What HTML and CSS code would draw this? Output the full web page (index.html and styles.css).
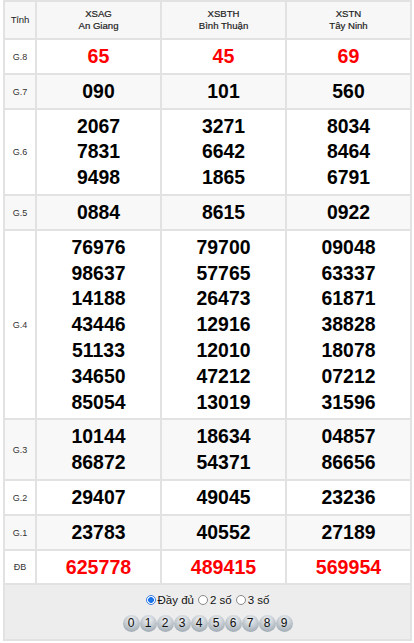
FILE: index.html
```html
<!DOCTYPE html>
<html lang="vi">
<head>
<meta charset="utf-8">
<link rel="stylesheet" href="styles.css">
</head>
<body>
<div class="wrap">
<table class="kq">
<thead>
<tr><th class="lbl">Tỉnh</th><th>XSAG<br>An Giang</th><th>XSBTH<br>Bình Thuận</th><th>XSTN<br>Tây Ninh</th></tr>
</thead>
<tbody>
<tr class="w"><td class="lbl">G.8</td><td class="red">65</td><td class="red">45</td><td class="red">69</td></tr>
<tr class="g"><td class="lbl">G.7</td><td>090</td><td>101</td><td>560</td></tr>
<tr class="w"><td class="lbl">G.6</td><td><div>2067</div><div>7831</div><div>9498</div></td><td><div>3271</div><div>6642</div><div>1865</div></td><td><div>8034</div><div>8464</div><div>6791</div></td></tr>
<tr class="g"><td class="lbl">G.5</td><td>0884</td><td>8615</td><td>0922</td></tr>
<tr class="w"><td class="lbl">G.4</td><td><div>76976</div><div>98637</div><div>14188</div><div>43446</div><div>51133</div><div>34650</div><div>85054</div></td><td><div>79700</div><div>57765</div><div>26473</div><div>12916</div><div>12010</div><div>47212</div><div>13019</div></td><td><div>09048</div><div>63337</div><div>61871</div><div>38828</div><div>18078</div><div>07212</div><div>31596</div></td></tr>
<tr class="g"><td class="lbl">G.3</td><td><div>10144</div><div>86872</div></td><td><div>18634</div><div>54371</div></td><td><div>04857</div><div>86656</div></td></tr>
<tr class="w"><td class="lbl">G.2</td><td>29407</td><td>49045</td><td>23236</td></tr>
<tr class="g"><td class="lbl">G.1</td><td>23783</td><td>40552</td><td>27189</td></tr>
<tr class="w"><td class="lbl">ĐB</td><td class="red">625778</td><td class="red">489415</td><td class="red">569954</td></tr>
</tbody>
</table>
<div class="foot">
<div class="opts">
<label class="opt"><span class="radio on"></span>Đầy đủ</label>
<label class="opt"><span class="radio"></span>2 số</label>
<label class="opt"><span class="radio"></span>3 số</label>
</div>
<div class="balls">
<span class="ball">0</span><span class="ball">1</span><span class="ball">2</span><span class="ball">3</span><span class="ball">4</span><span class="ball">5</span><span class="ball">6</span><span class="ball">7</span><span class="ball">8</span><span class="ball">9</span>
</div>
</div>
</div>
</body>
</html>
```

FILE: styles.css
```css
html, body {
  margin: 0;
  padding: 0;
  background: #fff;
}
body {
  font-family: "Liberation Sans", Arial, sans-serif;
  color: #000;
}
.wrap {
  padding: 0 2px 0 3px;
}
.kq {
  width: 100%;
  border-collapse: collapse;
  table-layout: fixed;
}
.kq th, .kq td {
  border: 2px solid #e2e2e2;
  text-align: center;
  vertical-align: middle;
}
.kq th {
  background: #f7f7f7;
  font-size: 9.6px;
  line-height: 12px;
  font-weight: normal;
  color: #222;
  padding: 6px 0;
  -webkit-text-stroke: 0.2px #222;
}
.kq th.lbl {
  width: 30px;
  -webkit-text-stroke: 0;
}
.kq td {
  font-size: 19.4px;
  font-weight: bold;
  line-height: 25.8px;
  padding: 4px 0 3px;
}
.kq td.lbl {
  font-size: 9px;
  font-weight: normal;
  color: #333;
  line-height: 12px;
}
.kq td.red {
  color: #f00;
  font-size: 19.6px;
}
.kq tr.w td { background: #fff; }
.kq tr.g td { background: #f8f8f8; }
.foot {
  background: #ededed;
  border: 2px solid #e2e2e2;
  border-top: 0;
  padding: 8px 0 7px;
  display: flex;
  flex-direction: column;
  align-items: center;
  gap: 8px;
}
.opts {
  display: flex;
  gap: 4px;
  font-size: 11.5px;
  line-height: 14px;
  color: #111;
}
.opt {
  display: flex;
  align-items: center;
  gap: 2px;
}
.radio {
  width: 8px;
  height: 8px;
  border-radius: 50%;
  border: 1px solid #888;
  background: #fff;
  box-sizing: content-box;
}
.radio.on {
  border-color: #3a7ee0;
  background: radial-gradient(circle, #1a73e8 0 2.6px, #fff 3.2px);
}
.balls {
  display: flex;
  gap: 0;
}
.ball {
  width: 17px;
  height: 17px;
  border-radius: 50%;
  background: radial-gradient(circle at 50% 30%, #f2f4f6 0, #c5ccd2 45%, #8e9aa4 100%);
  font-size: 12px;
  line-height: 17px;
  text-align: center;
  color: #111;
}
```
